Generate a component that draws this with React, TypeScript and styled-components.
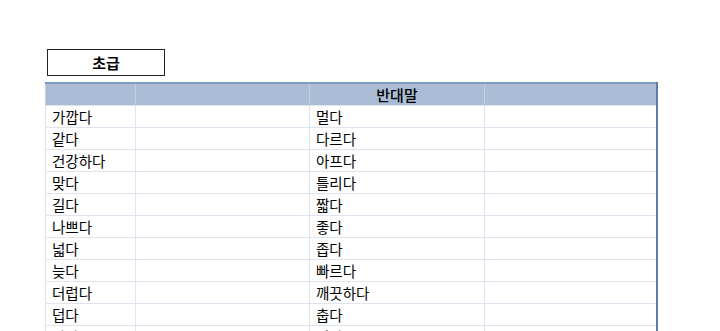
import React from "react";
import styled, { createGlobalStyle } from "styled-components";

const pairs: [string, string][] = [
    ["가깝다", "멀다"],
    ["같다", "다르다"],
    ["건강하다", "아프다"],
    ["맞다", "틀리다"],
    ["길다", "짧다"],
    ["나쁘다", "좋다"],
    ["넓다", "좁다"],
    ["늦다", "빠르다"],
    ["더럽다", "깨끗하다"],
    ["덥다", "춥다"],
    ["많다", "적다"],
];

const GlobalStyle = createGlobalStyle`
    html, body {
        margin: 0;
        padding: 0;
        background: #ffffff;
        overflow: hidden;
    }
    body {
        font-family: "Noto Sans CJK KR", "Noto Sans", sans-serif;
        color: #000;
    }
`;

const Page = styled.div`
    padding: 49px 0 0 45px;
    height: 331px;
    box-sizing: border-box;
`;

const LevelBox = styled.div`
    margin-left: 2px;
    width: 118px;
    height: 27px;
    box-sizing: border-box;
    border: 1px solid #222;
    display: flex;
    align-items: center;
    justify-content: center;
    font-size: 15px;
    font-weight: bold;
`;

const Table = styled.table`
    margin-top: 6px;
    width: 613px;
    border-collapse: collapse;
    table-layout: fixed;
    border-top: 2px solid #7f9bc1;
    border-left: 1px solid #4d6f9e;
    border-right: 2px solid #5b7daa;
`;

const HeadCell = styled.th`
    height: 21px;
    padding: 0;
    background: #abbdd6;
    border-left: 1px solid #c3d0e2;
    font-size: 15px;
    font-weight: 500;
    text-align: center;
    line-height: 20px;
`;

const Cell = styled.td`
    height: 21px;
    padding: 0 0 0 6px;
    border-top: 1px solid #dfe5ef;
    border-left: 1px solid #dfe5ef;
    font-size: 14.5px;
    line-height: 19px;
    white-space: nowrap;
    overflow: hidden;
    vertical-align: middle;
`;

export default function App() {
    return (
        <>
            <GlobalStyle />
            <Page>
                <LevelBox>초급</LevelBox>
                <Table>
                    <colgroup>
                        <col style={{ width: 90 }} />
                        <col style={{ width: 174 }} />
                        <col style={{ width: 175 }} />
                        <col />
                    </colgroup>
                    <thead>
                        <tr>
                            <HeadCell />
                            <HeadCell />
                            <HeadCell>반대말</HeadCell>
                            <HeadCell />
                        </tr>
                    </thead>
                    <tbody>
                        {pairs.map(([word, opposite]) => (
                            <tr key={word}>
                                <Cell>{word}</Cell>
                                <Cell />
                                <Cell>{opposite}</Cell>
                                <Cell />
                            </tr>
                        ))}
                    </tbody>
                </Table>
            </Page>
        </>
    );
}
